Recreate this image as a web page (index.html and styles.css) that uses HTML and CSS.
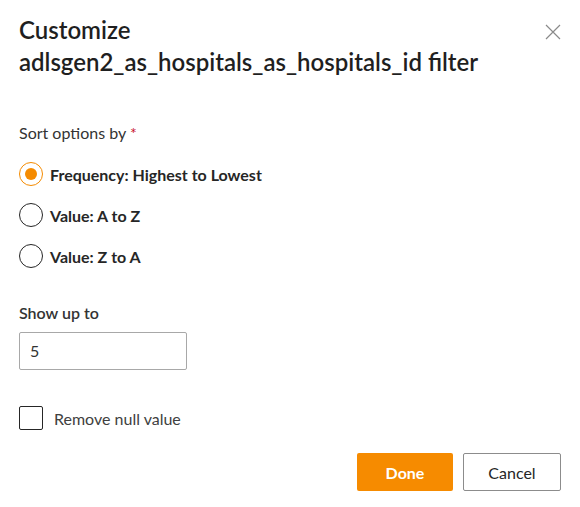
FILE: index.html
```html
<!DOCTYPE html>
<html>
<head>
<meta charset="utf-8">
<link rel="stylesheet" href="styles.css">
</head>
<body>
<div class="dialog">
  <div class="header">
    <h1 class="title">Customize<br>adlsgen2_as_hospitals_as_hospitals_id filter</h1>
    <button class="close" aria-label="Close">
      <svg width="16" height="16" viewBox="0 0 16 16"><path d="M1 1L15 15M15 1L1 15" stroke="#8a8a8a" stroke-width="1.2" fill="none"/></svg>
    </button>
  </div>
  <div class="section">
    <div class="label">Sort options by <span class="req">*</span></div>
    <div class="radios">
      <label class="radio"><span class="circle checked"><span class="dot"></span></span><span class="rtext">Frequency: Highest to Lowest</span></label>
      <label class="radio"><span class="circle"></span><span class="rtext">Value: A to Z</span></label>
      <label class="radio"><span class="circle"></span><span class="rtext">Value: Z to A</span></label>
    </div>
  </div>
  <div class="section2">
    <div class="label strong">Show up to</div>
    <div class="input">5</div>
  </div>
  <label class="check"><span class="box"></span><span class="ctext">Remove null value</span></label>
  <div class="footer">
    <button class="btn primary">Done</button>
    <button class="btn secondary">Cancel</button>
  </div>
</div>
</body>
</html>
```
FILE: styles.css
```css
* { box-sizing: border-box; }
html, body { margin: 0; padding: 0; background: #fff; }
body {
  font-family: "Source Sans Pro", Lato, "Noto Sans", sans-serif;
  color: #262626;
  width: 580px;
  height: 507px;
  overflow: hidden;
}
.dialog { padding: 14px 19px 0 19px; }
.header { display: flex; justify-content: space-between; align-items: flex-start; }
.title {
  margin: 0;
  font-size: 24px;
  font-weight: 600;
  line-height: 32px;
  color: #1f1f1f;
}
.close {
  background: none; border: 0; padding: 0; margin: 10px 0 0 0;
  width: 16px; height: 16px; display: flex;
}
.section { margin-top: 45px; }
.label { font-size: 16px; line-height: 20px; color: #333; }
.label.strong { font-weight: 600; }
.req { color: #c8102e; }
.radios { display: flex; flex-direction: column; gap: 17px; margin-top: 19px; }
.radio { display: flex; align-items: center; gap: 7px; height: 24px; }
.circle {
  width: 24px; height: 24px; border-radius: 50%;
  border: 1.5px solid #262626; display: flex; align-items: center; justify-content: center;
}
.circle.checked { border-color: #f58b00; }
.dot { width: 12px; height: 12px; border-radius: 50%; background: #f58b00; }
.rtext { font-size: 16px; font-weight: 700; color: #262626; }
.section2 { margin-top: 35px; }
.input {
  margin-top: 9px;
  width: 168px; height: 38px;
  border: 1px solid #a8a8a8; border-radius: 2px;
  padding: 0 10px; font-size: 16px; line-height: 36px; color: #333;
}
.check { display: flex; align-items: center; gap: 11px; margin-top: 36px; }
.box { width: 24px; height: 24px; border: 1.5px solid #262626; border-radius: 2px; }
.ctext { font-size: 16px; color: #404040; }
.footer { display: flex; justify-content: flex-end; gap: 10px; margin-top: 23px; padding-right: 0; }
.btn {
  height: 38px; font-family: inherit; font-size: 16px; border-radius: 2px; cursor: pointer;
}
.primary { width: 96px; background: #f68b00; border: 0; color: #fff; font-weight: 700; }
.secondary { width: 98px; background: #fff; border: 1px solid #8c8c8c; color: #262626; }
```
